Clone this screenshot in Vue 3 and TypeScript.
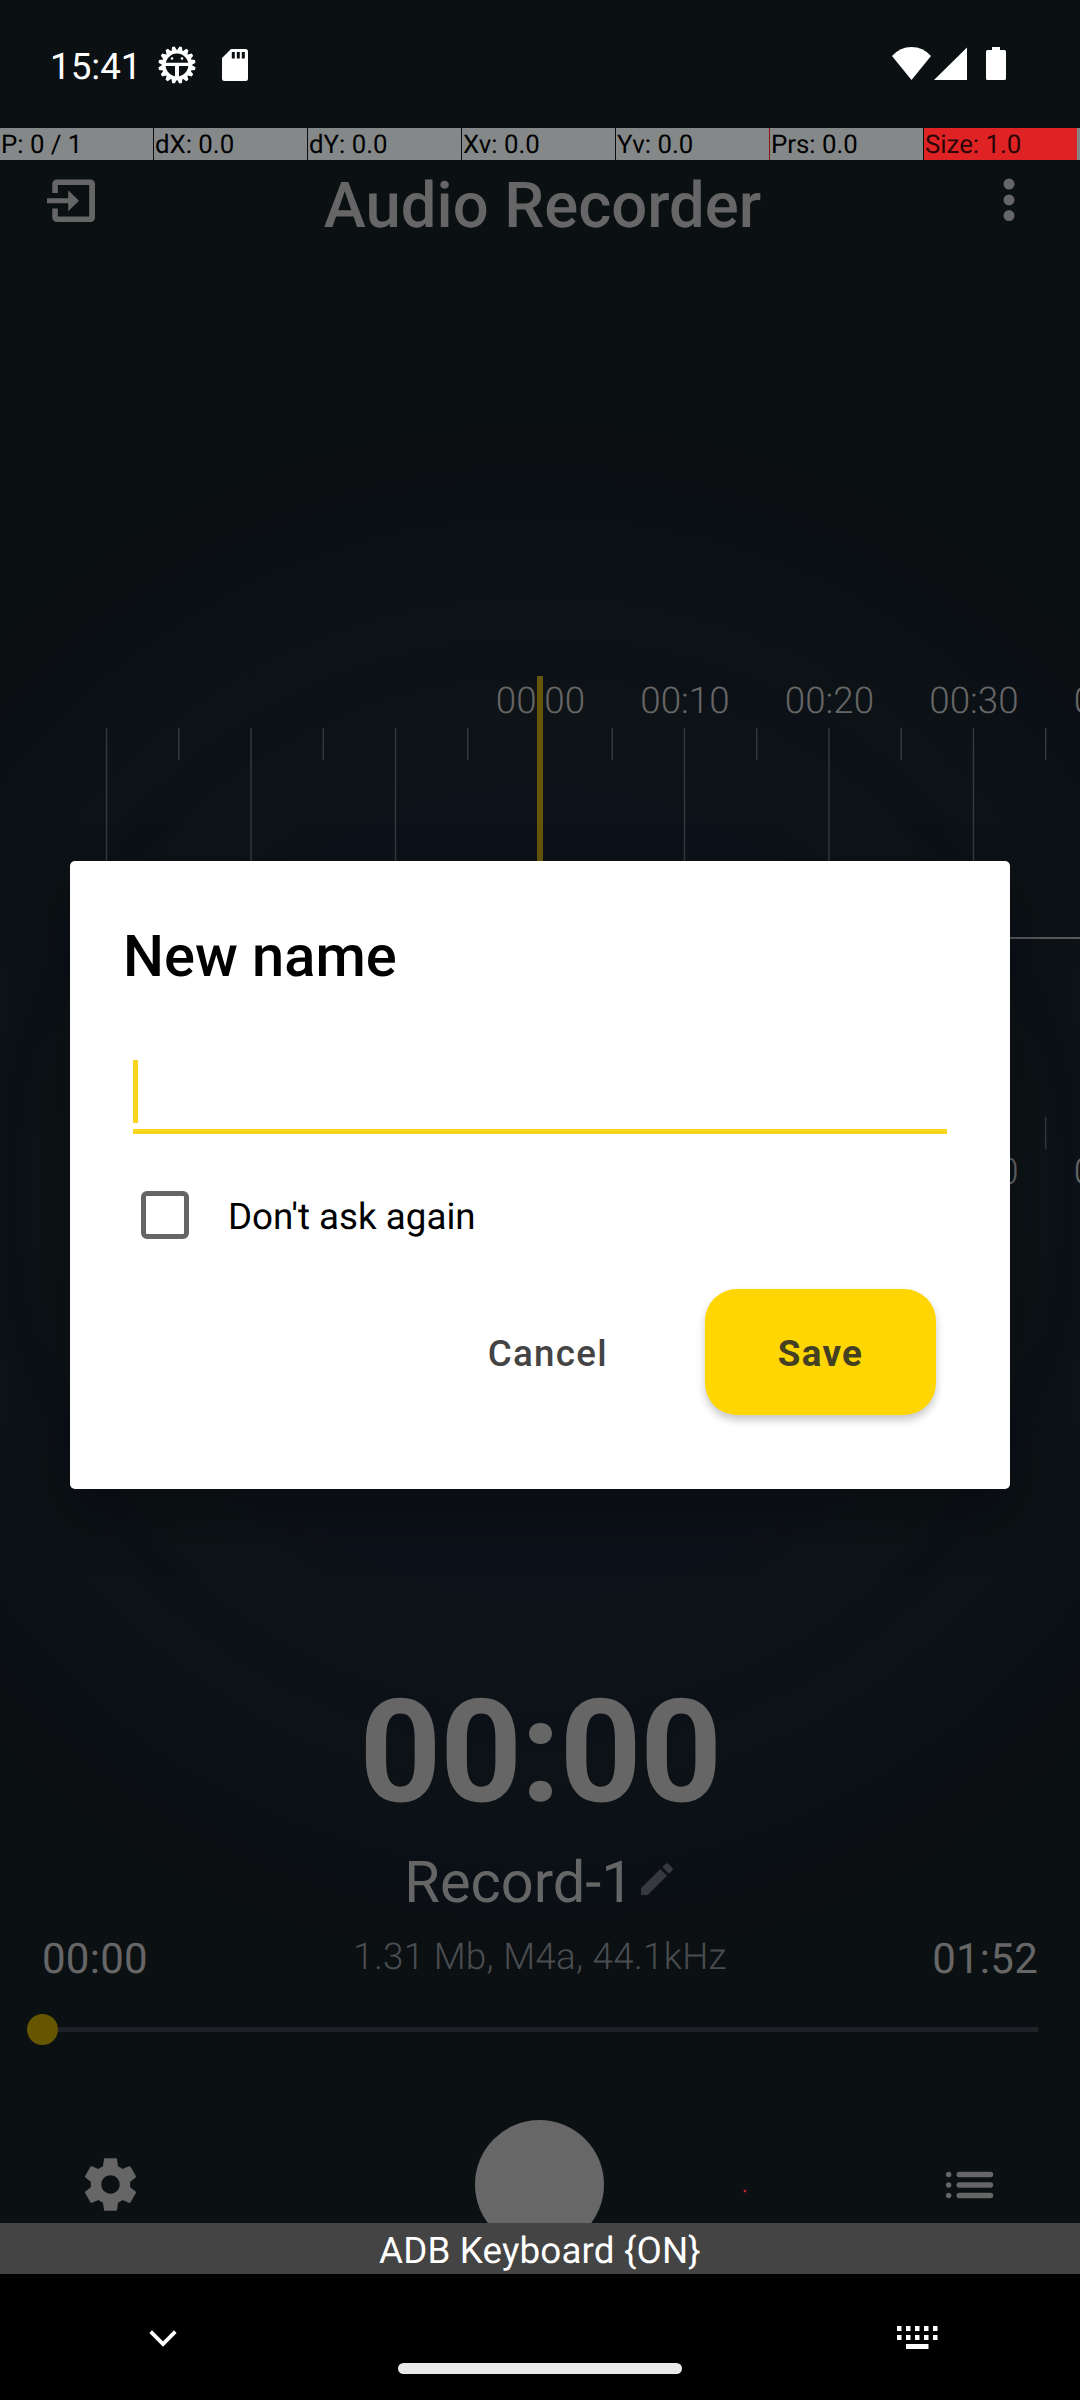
<script setup lang="ts">
interface PointerCell {
  label: string
  state?: 'alert' | 'edge'
}

const pointerCells: PointerCell[] = [
  { label: 'P: 0 / 1' },
  { label: 'dX: 0.0' },
  { label: 'dY: 0.0' },
  { label: 'Xv: 0.0' },
  { label: 'Yv: 0.0', state: 'edge' },
  { label: 'Prs: 0.0' },
  { label: 'Size: 1.0', state: 'alert' },
]

const step = 72.24
const ticks = Array.from({ length: 14 }, (_, i) => ({
  x: 540 + (i - 6) * step,
  long: i % 2 === 0,
}))
const marks = ['00:00', '00:10', '00:20', '00:30', '00:40'].map((text, i) => ({
  text,
  x: 540.5 + i * step * 2,
}))

const teeth = Array.from({ length: 16 }, (_, i) => i * 22.5)
const keyColumns = [0, 9, 18, 27, 36]
</script>

<template>
  <div class="screen">
    <main class="app">
      <div class="status">
        <span class="clock">15:41</span>
        <svg class="bug" viewBox="0 0 38 38" width="38" height="38">
          <g transform="translate(19 19)" fill="#fff">
            <path v-for="a in teeth" :key="a" d="M-3.3-13L-1.3-18.6H1.3L3.3-13Z" :transform="`rotate(${a + 11.25})`" />
            <circle r="13.2" fill="none" stroke="#fff" stroke-width="3.6" />
            <path d="M-13-2.2H13V.9H2V14H-2V.9H-13Z" />
            <circle cx="-5" cy="-6.5" r="1.3" />
            <circle cx="5" cy="-6.5" r="1.3" />
          </g>
        </svg>
        <svg class="sd" viewBox="0 0 26 32" width="26" height="32">
          <path d="M9 0H23.5A2.5 2.5 0 0 1 26 2.5V29.5A2.5 2.5 0 0 1 23.5 32H2.5A2.5 2.5 0 0 1 0 29.5V9Z" fill="#fff" />
          <path d="M9.8 3h3v6.5h-3zM14.8 3h3v6.5h-3zM19.8 3h3v6.5h-3z" fill="#0b1013" />
        </svg>
        <svg class="signals" viewBox="0 0 116 34" width="116" height="34">
          <g fill="#fff">
            <path d="M0 9Q8 0 19.5 0T39 9L19.5 33Z" />
            <path d="M42 33L75 .5V33Z" />
            <path d="M100 0H108V3H112.5Q114 3 114 4.5V31.5Q114 33 112.5 33H95.5Q94 33 94 31.5V4.5Q94 3 95.5 3H100Z" />
          </g>
        </svg>
      </div>

      <div class="pointer">
        <div v-for="c in pointerCells" :key="c.label" class="cell" :class="c.state">{{ c.label }}</div>
        <div class="cell rest"></div>
      </div>

      <header class="header">
        <svg viewBox="0 0 50 44" width="50" height="44">
          <path
            d="M5.3 14V5A4.5 4.5 0 0 1 9.8.5H43.5A4.5 4.5 0 0 1 48 5V38.5A4.5 4.5 0 0 1 43.5 43H9.8A4.5 4.5 0 0 1 5.3 38.5V29.5H10.8V37.5H42.2V6H10.8V14Z"
            fill="#666"
          />
          <path d="M0 19.3H21.2V11.3L32 21.8L21.2 32.3V24.3H0Z" fill="#666" />
        </svg>
        <h1>Audio Recorder</h1>
        <svg viewBox="0 0 12 44" width="12" height="44">
          <g fill="#666">
            <circle cx="6" cy="6" r="5.5" />
            <circle cx="6" cy="21.9" r="5.5" />
            <circle cx="6" cy="37.6" r="5.5" />
          </g>
        </svg>
      </header>

      <svg class="ruler" viewBox="0 0 1080 524" width="1080" height="524">
        <g fill="#34373a">
          <template v-for="t in ticks" :key="t.x">
            <rect :x="t.x - 0.75" y="52" width="1.5" :height="t.long ? 180 : 32" />
            <rect :x="t.x - 0.75" :y="t.long ? 293 : 441" width="1.5" :height="t.long ? 180 : 32" />
          </template>
        </g>
        <rect y="261" x="540" width="540" height="2" fill="#58595a" />
        <g class="mark">
          <template v-for="m in marks" :key="m.text">
            <text :x="m.x" y="37">{{ m.text }}</text>
            <text :x="m.x" y="508">{{ m.text }}</text>
          </template>
        </g>
        <rect x="537" y="0" width="6" height="524" fill="#66560a" />
      </svg>

      <div class="timer">00:00</div>
      <div class="record">
        <span>Record-1</span>
        <svg viewBox="0 0 32 32" width="32" height="32">
          <path d="M0 25.3L19.3 6L26 12.7L6.7 32H0ZM21.3 4L24.4.9Q25.9-.6 27.4.9L31.1 4.6Q32.6 6.1 31.1 7.6L28 10.7Z" fill="#38393e" />
        </svg>
      </div>
      <div class="info">
        <span>00:00</span>
        <small>1.31 Mb, M4a, 44.1kHz</small>
        <span>01:52</span>
      </div>
      <div class="slider">
        <i class="thumb"></i>
        <i class="track"></i>
      </div>
      <div class="controls">
        <svg viewBox="0 0 24 24" width="63" height="63">
          <path
            d="M19.43 12.98c.04-.32.07-.64.07-.98s-.03-.66-.07-.98l2.11-1.65c.19-.15.24-.42.12-.64l-2-3.46c-.12-.22-.39-.3-.61-.22l-2.49 1c-.52-.4-1.08-.73-1.69-.98l-.38-2.65C14.46 2.18 14.25 2 14 2h-4c-.25 0-.46.18-.49.42l-.38 2.65c-.61.25-1.17.59-1.69.98l-2.49-1c-.23-.09-.49 0-.61.22l-2 3.46c-.13.22-.07.49.12.64l2.11 1.65c-.04.32-.07.65-.07.98s.03.66.07.98l-2.11 1.65c-.19.15-.24.42-.12.64l2 3.46c.12.22.39.3.61.22l2.49-1c.52.4 1.08.73 1.69.98l.38 2.65c.03.24.24.42.49.42h4c.25 0 .46-.18.49-.42l.38-2.65c.61-.25 1.17-.59 1.69-.98l2.49 1c.23.09.49 0 .61-.22l2-3.46c.12-.22.07-.49-.12-.64l-2.11-1.65zM12 15.5c-1.93 0-3.5-1.57-3.5-3.5s1.57-3.5 3.5-3.5 3.5 1.57 3.5 3.5-1.57 3.5-3.5 3.5z"
            fill="#666"
          />
        </svg>
        <div class="rec"></div>
        <i class="touch"></i>
        <svg class="list" viewBox="0 0 48 28" width="48" height="28">
          <g fill="#666">
            <template v-for="y in [3.5, 14, 24.5]" :key="y">
              <circle cx="2.6" :cy="y" r="2.7" />
              <rect x="10.5" :y="y - 2.75" width="36.7" height="5.5" rx="2.75" />
            </template>
          </g>
        </svg>
      </div>

      <section class="dialog">
        <h2>New name</h2>
        <div class="field"><i class="caret"></i></div>
        <label class="check">
          <i class="box"></i>
          <span>Don't ask again</span>
        </label>
        <div class="actions">
          <button class="cancel">Cancel</button>
          <button class="save">Save</button>
        </div>
      </section>
    </main>

    <div class="ime">ADB Keyboard {ON}</div>
    <nav class="nav">
      <svg viewBox="0 0 28 17" width="28" height="17">
        <path d="M1.7 1.7L14 14L26.3 1.7" fill="none" stroke="#fff" stroke-width="3.8" />
      </svg>
      <i class="pill"></i>
      <svg viewBox="0 0 41 24" width="41" height="24">
        <g fill="#fff">
          <template v-for="x in keyColumns" :key="x">
            <rect :x="x" y="0" width="4.5" height="5" />
            <rect :x="x" y="9" width="4.5" height="5" />
          </template>
          <rect x="9" y="18" width="22.5" height="5" />
        </g>
      </svg>
    </nav>
  </div>
</template>

<style>
html,
body {
  background: #000;
}
</style>

<style scoped>
.screen {
  width: 1080px;
  height: 2400px;
  overflow: hidden;
  background: #000;
  font-family: Roboto, "Liberation Sans", sans-serif;
  text-rendering: geometricPrecision;
}
svg {
  display: block;
  flex: none;
}
.app {
  position: relative;
  display: flex;
  flex-direction: column;
  height: 2223px;
  overflow: hidden;
  color: #666;
  background: radial-gradient(
    circle 800px at 540px 1193px,
    #0d1119 400px,
    #0d1317 445px,
    #0d1316 505px,
    #0c1118 522px,
    #0c1118 542px,
    #0c1215 565px,
    #0b1114 655px,
    #0b1016 675px,
    #0b1016 700px,
    #0b0f12 735px,
    #0b1013 790px
  );
}
.status {
  display: flex;
  align-items: flex-start;
  flex: none;
  height: 128px;
  padding-left: 50px;
  box-sizing: border-box;
}
.clock {
  width: 108px;
  margin-top: 45px;
  font-size: 36.75px;
  line-height: 44px;
  color: #fff;
}
.bug {
  margin-top: 46px;
}
.sd {
  margin: 49px 0 0 26px;
}
.signals {
  margin: 47px 72px 0 auto;
}
.pointer {
  display: flex;
  gap: 1px;
  flex: none;
  height: 32px;
}
.cell {
  flex: none;
  box-sizing: border-box;
  width: 153px;
  height: 32px;
  padding-left: 1px;
  background: #848889;
  color: #000;
  font-size: 25.8px;
  line-height: 34px;
  white-space: nowrap;
}
.cell.edge {
  box-shadow: 1px 0 0 #8f1414;
}
.cell.alert {
  background: #df2324;
  color: #2a0607;
}
.cell.rest {
  width: 3px;
  margin-left: -1px;
  padding: 0;
}
.header {
  display: flex;
  align-items: flex-start;
  flex: none;
  height: 516px;
  padding: 0 65px 0 47px;
}
.header svg {
  margin-top: 19px;
}
.header svg:last-child {
  margin-top: 18px;
}
h1 {
  flex: 1;
  margin: 1px 0 0;
  padding-right: 15px;
  font-size: 63.4px;
  font-weight: 500;
  line-height: 90px;
  text-align: center;
}
.ruler {
  overflow: hidden;
}
.mark {
  font-size: 36.75px;
  font-weight: 300;
  fill: #666;
  text-anchor: middle;
}
.timer {
  margin-top: 468px;
  font-size: 143.4px;
  font-weight: 700;
  letter-spacing: -1.6px;
  line-height: 170px;
  text-align: center;
}
.record {
  display: flex;
  justify-content: center;
  gap: 7px;
  height: 68px;
  margin-top: 10px;
  padding-right: 3px;
  font-size: 57.75px;
  line-height: 70px;
}
.record svg {
  margin-top: 15px;
}
.info {
  display: flex;
  justify-content: space-between;
  height: 50px;
  margin-top: 18px;
  padding: 0 42px;
  font-size: 42px;
  line-height: 51px;
  letter-spacing: 0.25px;
}
.info small {
  font-size: 36.9px;
  font-weight: 300;
  line-height: 48px;
  letter-spacing: 0.25px;
  color: #4a4d50;
}
.slider {
  display: flex;
  align-items: center;
  height: 31px;
  margin-top: 30px;
  padding: 0 42px 0 27px;
}
.thumb {
  flex: none;
  width: 31px;
  height: 31px;
  border-radius: 50%;
  background: #665600;
}
.track {
  flex: 1;
  height: 5px;
  background: #1e2125;
}
.controls {
  display: flex;
  align-items: center;
  flex: none;
  height: 129px;
  margin-top: 75px;
  padding: 0 86px 0 79px;
}
.rec {
  width: 129px;
  height: 129px;
  margin-left: 333px;
  border-radius: 50%;
  background: #676767;
}
.touch {
  width: 2px;
  height: 2px;
  margin: 13px 0 0 140px;
  background: #b82c2c;
  box-shadow: 0 0 0 1px rgba(120, 16, 20, 0.35);
}
.list {
  margin-left: auto;
}
.dialog {
  position: absolute;
  left: 70px;
  top: 861px;
  display: flex;
  flex-direction: column;
  box-sizing: border-box;
  width: 940px;
  height: 628px;
  padding: 0 63px 0 52px;
  border-radius: 5px;
  background: #fff;
  color: #000;
  box-shadow: 0 24px 60px rgba(0, 0, 0, 0.3);
}
h2 {
  margin: 62px 0 0 1px;
  font-size: 57.75px;
  font-weight: 500;
  line-height: 68px;
}
.field {
  height: 69px;
  margin: 69px 0 0 11px;
  border-bottom: 5px solid #f9d61c;
}
.caret {
  display: block;
  width: 5px;
  height: 63px;
  background: #f9d61c;
}
.check {
  display: flex;
  align-items: center;
  height: 48px;
  margin: 57px 0 0 19px;
}
.box {
  box-sizing: border-box;
  width: 48px;
  height: 48px;
  border: 5px solid #656565;
  border-radius: 6px;
}
.check span {
  margin: 4px 0 0 39px;
  font-size: 36.75px;
  line-height: 44px;
}
.actions {
  display: flex;
  justify-content: flex-end;
  gap: 97px;
  margin: 50px 11px 0 0;
}
button {
  height: 126px;
  padding: 1px 0 0;
  border: 0;
  background: none;
  color: #444;
  font: 500 36.75px/127px Roboto, "Liberation Sans", sans-serif;
  letter-spacing: 1.3px;
}
.save {
  width: 231px;
  border-radius: 32px;
  background: #ffd602;
  color: #444022;
  font-weight: 700;
  box-shadow: 0 5px 9px rgba(0, 0, 0, 0.22);
}
.ime {
  height: 51px;
  background: #444;
  color: #fff;
  font-size: 36.75px;
  line-height: 56px;
  letter-spacing: 0.15px;
  text-align: center;
}
.nav {
  display: flex;
  align-items: flex-start;
  height: 126px;
  box-sizing: border-box;
  padding: 52px 142px 0 149px;
}
.nav svg:first-child {
  margin-top: 4px;
}
.nav svg:last-child {
  margin-left: auto;
}
.pill {
  width: 284px;
  height: 11px;
  margin: 37px 0 0 221px;
  border-radius: 6px;
  background: #eaeaea;
}
</style>
